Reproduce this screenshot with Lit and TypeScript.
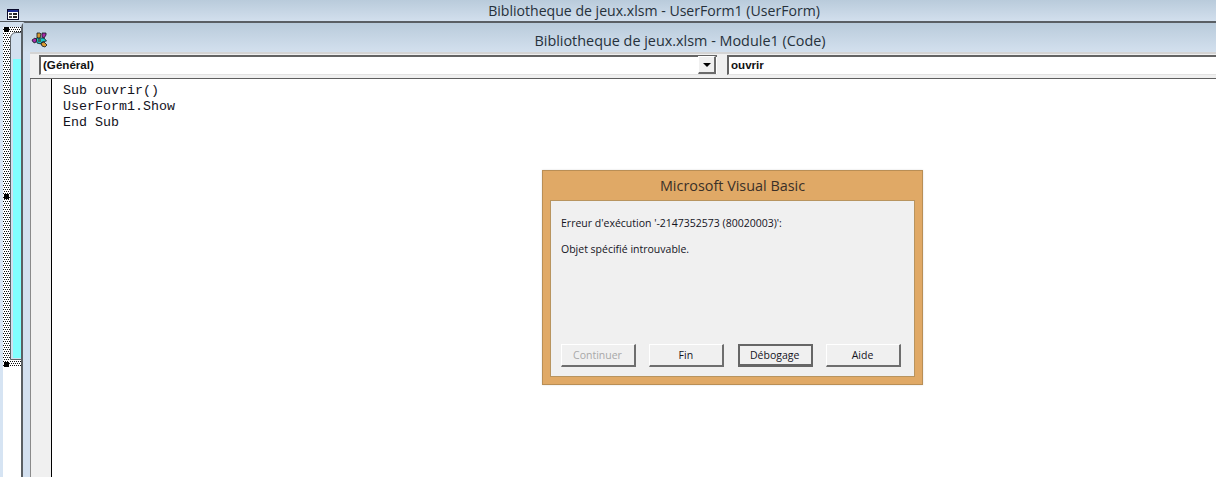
import { LitElement, html, css } from "lit";
import { customElement } from "lit/decorators.js";

@customElement("app-root")
export class AppRoot extends LitElement {
  static styles = css`
    :host { display: block; width: 1216px; height: 477px; overflow: hidden; position: relative; background: #fff; font-family: "Open Sans", "Liberation Sans", sans-serif; color: #1c2430; }
    .desk { position: relative; width: 1216px; height: 477px; overflow: hidden; }
    .strip { position: absolute; left: 0; top: 21px; width: 3px; bottom: 0; background: #d6e4f3; }
    .topbar { position: absolute; left: 0; top: 0; right: 0; height: 21px; background: linear-gradient(#b9cbdb, #d2dfed); border-bottom: 1px solid #50565c; display: flex; align-items: center; justify-content: center; padding: 0 0 0 92px; box-sizing: content-box; font-size: 14.1px; color: #26313b; }
    .topbar svg { position: absolute; left: 7px; top: 9px; }
    .sub { position: absolute; left: 0; top: 22px; width: 24px; height: 5px; background: #d2dfed; }
    .dots { position: absolute; background-color: #fff; background-image: conic-gradient(at 1px 1px, #111 25%, #0000 0), conic-gradient(at 1px 1px, #111 25%, #0000 0); background-size: 2px 4px, 2px 4px; background-position: 0 0, 1px 2px; }
    .d1 { left: 3px; top: 27px; width: 7px; height: 340px; }
    .d2 { left: 9px; top: 27px; width: 14px; height: 6px; }
    .d3 { left: 9px; top: 361px; width: 14px; height: 6px; }
    .handle { position: absolute; background: #000; width: 5px; height: 5px; left: 4px; }
    .form { position: absolute; left: 10px; top: 32px; width: 30px; height: 328px; border: 1px solid #5c6166; border-radius: 6px 0 0 0; background: #d2e0ef; box-sizing: border-box; padding: 26px 0 1px 2px; }
    .cyan { height: 299px; background: #80ffff; }
    .code { position: absolute; left: 21px; top: 21px; right: -4px; bottom: -4px; border: 2px solid #5a5f64; border-right: 0; border-bottom: 0; border-radius: 7px 0 0 0; background: #d3e0f0; display: flex; flex-direction: column; }
    .ctitle { flex: none; height: 29px; background: linear-gradient(#b9cbdb, #d3e0ee); display: flex; align-items: center; justify-content: center; font-size: 14.4px; color: #26313b; padding-left: 117px; position: relative; padding-top: 6px; box-sizing: border-box; }
    .ctitle svg { position: absolute; left: 8px; top: 8px; }
    .body { flex: 1; margin-left: 7px; display: flex; flex-direction: column; background: #fff; }
    .bar { flex: none; height: 27px; box-sizing: border-box; background: #f0f0f0; border-top: 2px solid #d4d4d4; border-bottom: 1px solid #5f5f5f; padding: 1px 0 0 9px; display: flex; gap: 10px; align-items: flex-start; }
    .combo { height: 20px; background: #fff; border-top: 2px solid #646464; border-left: 2px solid #646464; border-bottom: 1px solid #e3e3e3; box-sizing: border-box; font: bold 11.6px "Liberation Sans", sans-serif; color: #111; display: flex; align-items: center; padding: 0 0 2px 2px; position: relative; }
    .c1 { width: 678px; flex: none; }
    .c2 { flex: 1; }
    .drop { position: absolute; right: 1px; top: -1px; width: 18px; height: 18px; background: #f0f0f0; border-top: 1px solid #fff; border-left: 1px solid #fff; border-right: 2px solid #6a6a6a; border-bottom: 2px solid #6a6a6a; box-sizing: border-box; display: flex; align-items: center; justify-content: center; }
    .tri { width: 0; height: 0; border: 4px solid transparent; border-top: 4px solid #000; border-bottom: 0; }
    .edit { flex: 1; display: flex; border-left: 1px solid #8a8a8a; }
    .margin { flex: none; width: 20px; background: #f0f0f0; border-right: 1px solid #000; }
    .lines { font: 13.33px/16px "Liberation Mono", monospace; color: #12121c; padding: 4px 0 0 11px; white-space: pre; }
    .dlg { position: absolute; left: 542px; top: 170px; width: 381px; height: 215px; box-sizing: border-box; background: #e0a966; border: 1px solid #b98e55; padding: 0 7px 7px; display: flex; flex-direction: column; box-shadow: 0 0 2px #ddd; }
    .dtitle { flex: none; height: 29px; display: flex; align-items: center; justify-content: center; font-size: 14.4px; color: #3a3028; }
    .dbody { flex: 1; background: #f0f0f0; border: 1px solid #b8945f; display: flex; flex-direction: column; padding: 15px 13px 9px 10px; font-size: 10.5px; color: #14141e; }
    .msg { margin: 0; line-height: 14px; }
    .msg + .msg { margin-top: 12px; }
    .btns { margin-top: auto; display: flex; justify-content: space-between; }
    .btn { width: 75px; height: 23px; box-sizing: border-box; background: #f0f0f0; border-top: 1px solid #fff; border-left: 1px solid #fff; border-right: 2px solid #6e6e6e; border-bottom: 2px solid #6e6e6e; display: flex; align-items: center; justify-content: center; font-size: 10.5px; padding-right: 1px; }
    .btn.off { color: #a8a8a8; }
    .btn.def { border: 2px solid #666; border-bottom-width: 3px; }
  `;

  private formIcon() {
    return html`<svg width="12" height="11" viewBox="0 0 12 11" shape-rendering="crispEdges">
      <rect x="0.5" y="0.5" width="11" height="10" fill="#fff" stroke="#0a0a2a"/>
      <rect x="1" y="1" width="10" height="2" fill="#1a2a90"/>
      <rect x="2" y="4" width="3" height="2" fill="#444"/><rect x="6.5" y="4.5" width="3" height="1" fill="none" stroke="#222"/>
      <rect x="2" y="7" width="3" height="2" fill="#444"/><rect x="6.5" y="7.5" width="3" height="1" fill="none" stroke="#222"/>
    </svg>`;
  }

  private moduleIcon() {
    return html`<svg width="17" height="17" viewBox="0 0 17 17">
      <g stroke="#101820" stroke-width=".8" stroke-linejoin="round">
        <path d="M5 7h8l2.5 3-4.5 1-1 2-4-1z" fill="#18c4c4"/>
        <path d="M6 2h3l1 1-1 4H7L6 6z" fill="#d89a30"/>
        <path d="M11 2h4v2l-2 3-2-1z" fill="#a82aa8"/>
        <path d="M1 9l3-2 2 2-2 3-2-1z" fill="#a82aa8"/>
        <path d="M10 12l3-1 3 3-2 2-3-1z" fill="#d89a30"/>
      </g>
      <rect x="7" y="8" width="3" height="3" fill="#3b6b58"/>
    </svg>`;
  }

  render() {
    return html`<div class="desk">
      <div class="strip"></div>
      <div class="sub"></div>
      <div class="dots d1"></div>
      <div class="dots d2"></div>
      <div class="dots d3"></div>
      <div class="form"><div class="cyan"></div></div>
      <div class="handle" style="top:27px"></div>
      <div class="handle" style="top:194px"></div>
      <div class="handle" style="top:362px"></div>
      <div class="topbar">${this.formIcon()}<span>Bibliotheque de jeux.xlsm - UserForm1 (UserForm)</span></div>
      <div class="code">
        <div class="ctitle">${this.moduleIcon()}<span>Bibliotheque de jeux.xlsm - Module1 (Code)</span></div>
        <div class="body">
          <div class="bar">
            <div class="combo c1">(Général)<div class="drop"><div class="tri"></div></div></div>
            <div class="combo c2">ouvrir</div>
          </div>
          <div class="edit">
            <div class="margin"></div>
            <div class="lines">Sub ouvrir()
UserForm1.Show
End Sub</div>
          </div>
        </div>
      </div>
      <div class="dlg">
        <div class="dtitle">Microsoft Visual Basic</div>
        <div class="dbody">
          <p class="msg">Erreur d'exécution '-2147352573 (80020003)':</p>
          <p class="msg">Objet spécifié introuvable.</p>
          <div class="btns">
            <div class="btn off">Continuer</div>
            <div class="btn">Fin</div>
            <div class="btn def">Débogage</div>
            <div class="btn">Aide</div>
          </div>
        </div>
      </div>
    </div>`;
  }
}
